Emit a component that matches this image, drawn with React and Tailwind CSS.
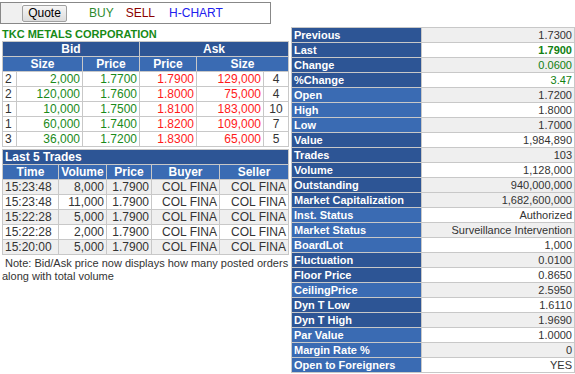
import React from 'react';

const bids = [
  [2, '2,000', '1.7700', '1.7900', '129,000', 4],
  [2, '120,000', '1.7600', '1.8000', '75,000', 4],
  [1, '10,000', '1.7500', '1.8100', '183,000', 10],
  [1, '60,000', '1.7400', '1.8200', '109,000', 7],
  [3, '36,000', '1.7200', '1.8300', '65,000', 5],
];

const trades = [
  ['15:23:48', '8,000', '1.7900', 'COL FINA', 'COL FINA'],
  ['15:23:48', '11,000', '1.7900', 'COL FINA', 'COL FINA'],
  ['15:22:28', '5,000', '1.7900', 'COL FINA', 'COL FINA'],
  ['15:22:28', '2,000', '1.7900', 'COL FINA', 'COL FINA'],
  ['15:20:00', '5,000', '1.7900', 'COL FINA', 'COL FINA'],
];

// [label, value, darkLabel, grayValue, valueClass]
const stats = [
  ['Previous', '1.7300', true, true, ''],
  ['Last', '1.7900', true, false, 'text-[#108010] font-bold'],
  ['Change', '0.0600', true, true, 'text-[#108010]'],
  ['%Change', '3.47', true, false, 'text-[#108010]'],
  ['Open', '1.7200', false, true, ''],
  ['High', '1.8000', false, false, ''],
  ['Low', '1.7000', false, true, ''],
  ['Value', '1,984,890', true, false, ''],
  ['Trades', '103', true, true, ''],
  ['Volume', '1,128,000', true, false, ''],
  ['Outstanding', '940,000,000', true, true, ''],
  ['Market Capitalization', '1,682,600,000', true, true, ''],
  ['Inst. Status', 'Authorized', false, false, ''],
  ['Market Status', 'Surveillance Intervention', false, true, ''],
  ['BoardLot', '1,000', false, false, ''],
  ['Fluctuation', '0.0100', true, true, ''],
  ['Floor Price', '0.8650', true, false, ''],
  ['CeilingPrice', '2.5950', false, true, ''],
  ['Dyn T Low', '1.6110', true, false, ''],
  ['Dyn T High', '1.9690', true, true, ''],
  ['Par Value', '1.0000', false, false, ''],
  ['Margin Rate %', '0', false, true, ''],
  ['Open to Foreigners', 'YES', false, false, ''],
];

const td = 'h-[15px] p-0 px-[2px] border border-[#c8c8c8] leading-[13px]';
const th = 'h-[15px] p-0 border border-[#c8c8c8] leading-[13px] text-white font-bold text-[12px] text-center';

export default function App() {
  return (
    <div className="w-[575px] h-[374px] bg-white font-['Liberation_Sans',Arial,sans-serif] text-[11px] text-[#333] flex">
      {/* left column */}
      <div className="w-[290px] shrink-0 pt-[2px]">
        <div className="w-[271px] h-[22px] border border-[#888] flex items-stretch">
          <div className="w-[21px] bg-[#f0f0f0]" />
          <div className="flex items-center">
            <button className="h-[17px] w-[45px] border border-[#a0a0a0] rounded-[2px] bg-gradient-to-b from-[#f6f6f6] to-[#dcdcdc] text-[12px] text-black leading-none">
              Quote
            </button>
            <span className="ml-[22px] text-[12px] text-[#2e8b2e]">BUY</span>
            <span className="ml-[12px] text-[12px] text-[#8b0000]">SELL</span>
            <span className="ml-[14px] text-[12px] text-[#2020ee]">H-CHART</span>
          </div>
        </div>

        <div className="mt-[3px] ml-[2px] text-[11px] font-bold text-[#178a17] leading-[14px]">TKC METALS CORPORATION</div>

        <table className="ml-[2px] w-[286px] table-fixed border-collapse">
          <colgroup>
            <col className="w-[14px]" />
            <col className="w-[66px]" />
            <col className="w-[57px]" />
            <col className="w-[57px]" />
            <col className="w-[67px]" />
            <col className="w-[25px]" />
          </colgroup>
          <thead>
            <tr className="bg-[#2d5595]">
              <th colSpan={3} className={th}>Bid</th>
              <th colSpan={3} className={th}>Ask</th>
            </tr>
            <tr className="bg-[#3a6bb3]">
              <th colSpan={2} className={th}>Size</th>
              <th className={th}>Price</th>
              <th className={th}>Price</th>
              <th colSpan={2} className={th}>Size</th>
            </tr>
          </thead>
          <tbody>
            {bids.map((r, i) => (
              <tr key={i} className="bg-white text-[12px]">
                <td className={td + ' text-left'}>{r[0]}</td>
                <td className={td + ' text-right text-[#1a8a1a]'}>{r[1]}</td>
                <td className={td + ' text-right text-[#1a8a1a]'}>{r[2]}</td>
                <td className={td + ' text-right text-[#ff1a1a]'}>{r[3]}</td>
                <td className={td + ' text-right text-[#ff1a1a]'}>{r[4]}</td>
                <td className={td + ' text-center'}>{r[5]}</td>
              </tr>
            ))}
          </tbody>
        </table>

        <table className="mt-[2px] ml-[2px] w-[286px] table-fixed border-collapse">
          <colgroup>
            <col className="w-[56px]" />
            <col className="w-[48px]" />
            <col className="w-[45px]" />
            <col className="w-[68px]" />
            <col className="w-[69px]" />
          </colgroup>
          <thead>
            <tr className="bg-[#2d5595]">
              <th colSpan={5} className={th + ' text-left px-[2px]'}>Last 5 Trades</th>
            </tr>
            <tr className="bg-[#3a6bb3]">
              <th className={th}>Time</th>
              <th className={th}>Volume</th>
              <th className={th}>Price</th>
              <th className={th}>Buyer</th>
              <th className={th}>Seller</th>
            </tr>
          </thead>
          <tbody>
            {trades.map((r, i) => (
              <tr key={i} className={(i % 2 === 0 ? 'bg-[#efefef]' : 'bg-white') + ' text-[12px]'}>
                <td className={td + ' text-left'}>{r[0]}</td>
                <td className={td + ' text-right'}>{r[1]}</td>
                <td className={td + ' text-right'}>{r[2]}</td>
                <td className={td + ' text-right whitespace-nowrap overflow-hidden'}>{r[3]}</td>
                <td className={td + ' text-right whitespace-nowrap overflow-hidden'}>{r[4]}</td>
              </tr>
            ))}
          </tbody>
        </table>

        <p className="mt-[2px] pl-[2px] text-[11px] leading-[13px] text-[#333]">
          &nbsp;Note: Bid/Ask price now displays how many posted orders along with total volume
        </p>
      </div>

      {/* right column */}
      <div className="pt-[27px] pl-[1px]">
        <table className="w-[283px] table-fixed border-collapse">
          <colgroup>
            <col className="w-[130px]" />
            <col className="w-[153px]" />
          </colgroup>
          <tbody>
            {stats.map(([label, value, dark, gray, cls]) => (
              <tr key={label}>
                <td className={td + ' text-white font-bold text-[11px] whitespace-nowrap ' + (dark ? 'bg-[#2d5595]' : 'bg-[#3a6bb3]')}>{label}</td>
                <td className={td + ' text-right text-[11px] whitespace-nowrap ' + (gray ? 'bg-[#efefef] ' : 'bg-white ') + cls}>{value}</td>
              </tr>
            ))}
          </tbody>
        </table>
      </div>
    </div>
  );
}
